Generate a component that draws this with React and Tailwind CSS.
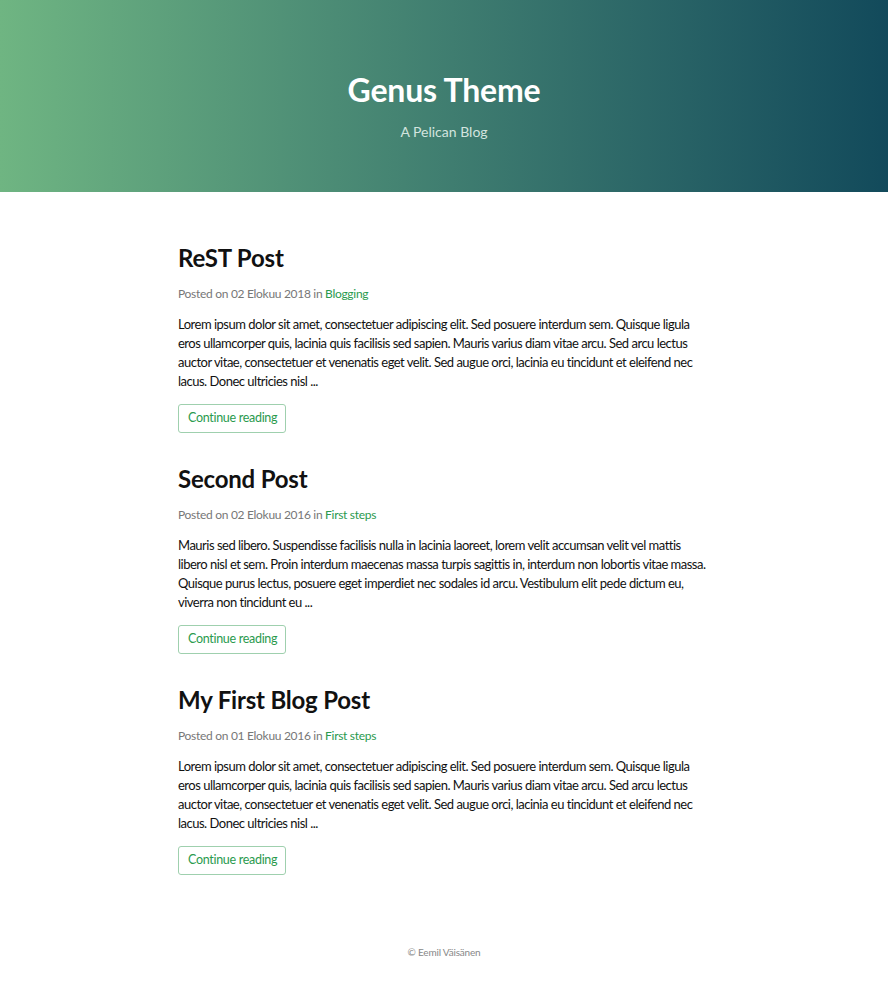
import React from "react";

const posts = [
  {
    title: "ReST Post",
    date: "02 Elokuu 2018",
    cat: "Blogging",
    lines: [
      "Lorem ipsum dolor sit amet, consectetuer adipiscing elit. Sed posuere interdum sem. Quisque ligula",
      "eros ullamcorper quis, lacinia quis facilisis sed sapien. Mauris varius diam vitae arcu. Sed arcu lectus",
      "auctor vitae, consectetuer et venenatis eget velit. Sed augue orci, lacinia eu tincidunt et eleifend nec",
      "lacus. Donec ultricies nisl ...",
    ],
  },
  {
    title: "Second Post",
    date: "02 Elokuu 2016",
    cat: "First steps",
    lines: [
      "Mauris sed libero. Suspendisse facilisis nulla in lacinia laoreet, lorem velit accumsan velit vel mattis",
      "libero nisl et sem. Proin interdum maecenas massa turpis sagittis in, interdum non lobortis vitae massa.",
      "Quisque purus lectus, posuere eget imperdiet nec sodales id arcu. Vestibulum elit pede dictum eu,",
      "viverra non tincidunt eu ...",
    ],
  },
  {
    title: "My First Blog Post",
    date: "01 Elokuu 2016",
    cat: "First steps",
    lines: [
      "Lorem ipsum dolor sit amet, consectetuer adipiscing elit. Sed posuere interdum sem. Quisque ligula",
      "eros ullamcorper quis, lacinia quis facilisis sed sapien. Mauris varius diam vitae arcu. Sed arcu lectus",
      "auctor vitae, consectetuer et venenatis eget velit. Sed augue orci, lacinia eu tincidunt et eleifend nec",
      "lacus. Donec ultricies nisl ...",
    ],
  },
];

export default function App() {
  return (
    <div className="min-h-[989px] bg-white font-['Lato',sans-serif] text-[#111]">
      <header className="h-[192px] bg-gradient-to-r from-[#6fb582] to-[#124a5b] flex flex-col items-center">
        <h1 className="mt-[72px] text-[32px] leading-[36px] font-bold text-white tracking-[-0.2px]">Genus Theme</h1>
        <p className="mt-[14px] text-[14px] leading-[20px] text-[#d3e4df]">A Pelican Blog</p>
      </header>
      <main className="w-[532px] mx-auto pt-[50px]">
        {posts.map((p) => (
          <article key={p.title} className="mb-[30px]">
            <h2 className="text-[24px] leading-[32px] font-bold text-[#111] tracking-[-0.2px]">{p.title}</h2>
            <p className="mt-[10px] text-[12px] leading-[19px] text-[#777] tracking-[-0.3px]">
              Posted on {p.date} in <a className="text-[#2a9a4e]">{p.cat}</a>
            </p>
            <div className="mt-[12px] text-[13px] leading-[19px] text-[#111] tracking-[-0.5px]">
              {p.lines.map((l, i) => (
                <div key={i} className="whitespace-nowrap">{l}</div>
              ))}
            </div>
            <a className="mt-[13px] inline-flex items-center justify-center h-[29px] pl-[9px] pr-[8px] border border-[#9fd0ae] rounded-[3px] text-[12.5px] tracking-[-0.3px] text-[#2a9a4e]">
              Continue reading
            </a>
          </article>
        ))}
      </main>
      <footer className="pt-[40px] text-center text-[10px] leading-[14px] text-[#888] tracking-[-0.2px]">© Eemil Väisänen</footer>
    </div>
  );
}
